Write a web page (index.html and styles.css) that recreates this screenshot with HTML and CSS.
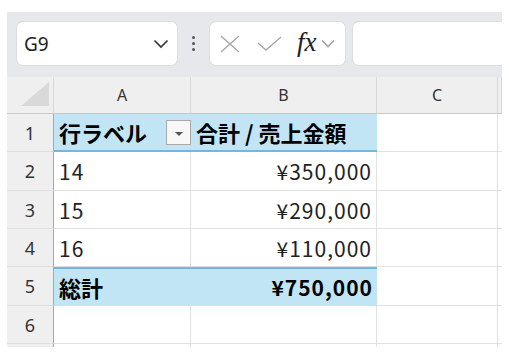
FILE: index.html
```html
<!DOCTYPE html>
<html lang="ja">
<head>
  <meta charset="UTF-8">
  <title>ピボットテーブル</title>
  <link rel="stylesheet" href="styles.css">
</head>
<body>

  <div class="app">
    <div class="toolbar">
      <div class="name-box">
        <span class="cell-ref">G9</span>
        <svg class="chev" width="16" height="10" viewBox="0 0 16 10"><path d="M1.5 1.5 L8 8 L14.5 1.5" fill="none" stroke="#333" stroke-width="1.6"/></svg>
      </div>
      <div class="dots"><i></i><i></i><i></i></div>
      <div class="fx-box">
        <svg width="20" height="18" viewBox="0 0 20 18"><path d="M1 1 L19 17 M19 1 L1 17" stroke="#a6a6a6" stroke-width="1.4" fill="none"/></svg>
        <svg width="25" height="15" viewBox="0 0 25 15"><path d="M1 7 L9 14 L24 1" stroke="#a6a6a6" stroke-width="1.4" fill="none"/></svg>
        <span class="fx">fx</span>
        <svg width="14" height="9" viewBox="0 0 14 9"><path d="M1 1.5 L7 7.5 L13 1.5" fill="none" stroke="#999" stroke-width="1.3"/></svg>
      </div>
      <div class="formula-box"></div>
    </div>

    <div class="sheet">
      <!-- column headers -->
      <div class="corner"><span class="tri"></span></div>
      <div class="col-head">A</div>
      <div class="col-head">B</div>
      <div class="col-head">C</div>
      <div class="col-head"></div>

      <!-- row 1 -->
      <div class="row-head">1</div>
      <div class="cell pivot-head bold">行ラベル<span class="filter-btn"><span class="arrow"></span></span></div>
      <div class="cell pivot-head bold">合計 / 売上金額</div>
      <div class="cell"></div>
      <div class="cell"></div>

      <!-- row 2 -->
      <div class="row-head">2</div>
      <div class="cell num-left">14</div>
      <div class="cell num">¥350,000</div>
      <div class="cell"></div>
      <div class="cell"></div>

      <!-- row 3 -->
      <div class="row-head">3</div>
      <div class="cell num-left">15</div>
      <div class="cell num">¥290,000</div>
      <div class="cell"></div>
      <div class="cell"></div>

      <!-- row 4 -->
      <div class="row-head">4</div>
      <div class="cell num-left">16</div>
      <div class="cell num">¥110,000</div>
      <div class="cell"></div>
      <div class="cell"></div>

      <!-- row 5 -->
      <div class="row-head">5</div>
      <div class="cell total bold">総計</div>
      <div class="cell total bold num">¥750,000</div>
      <div class="cell"></div>
      <div class="cell"></div>

      <!-- row 6 -->
      <div class="row-head">6</div>
      <div class="cell"></div>
      <div class="cell"></div>
      <div class="cell"></div>
      <div class="cell"></div>

      <!-- row 7 (cut off) -->
      <div class="row-head"></div>
      <div class="cell"></div>
      <div class="cell"></div>
      <div class="cell"></div>
      <div class="cell"></div>
    </div>
  </div>

</body>
</html>
```

FILE: styles.css
```css
body {
  margin: 0;
  padding: 0;
  background: #ffffff;
  font-family: "Noto Sans", "Noto Sans CJK JP", sans-serif;
}
.app {
  margin: 12px 0 0 7px;
  width: 495px;
  height: 335px;
  overflow: hidden;
  background: #e7e8eb;
}
.toolbar {
  display: flex;
  align-items: center;
  padding: 10px 0 12px 10px;
  height: 43px;
}
.name-box {
  flex-shrink: 0;
  width: 160px;
  height: 43px;
  box-sizing: border-box;
  background: #fff;
  border-radius: 6px;
  box-shadow: 0 0 0 1px #dcdde0;
  display: flex;
  align-items: center;
  justify-content: space-between;
  padding: 0 8px 0 7px;
}
.cell-ref {
  font-size: 19px;
  color: #222;
}
.dots {
  flex-shrink: 0;
  width: 33px;
  display: flex;
  flex-direction: column;
  align-items: center;
  gap: 3px;
}
.dots i {
  width: 3px;
  height: 3px;
  border-radius: 50%;
  background: #555;
}
.fx-box {
  flex-shrink: 0;
  width: 135px;
  height: 43px;
  box-sizing: border-box;
  background: #fff;
  border-radius: 6px;
  box-shadow: 0 0 0 1px #dcdde0;
  display: flex;
  align-items: center;
  padding-left: 10px;
}
.fx-box svg:nth-child(2) {
  margin-left: 17px;
}
.fx {
  font-family: "Liberation Serif", "DejaVu Serif", serif;
  font-style: italic;
  font-size: 27px;
  color: #222;
  margin: -3px 4px 0 15px;
}
.formula-box {
  flex-shrink: 0;
  margin-left: 8px;
  width: 170px;
  height: 43px;
  background: #fff;
  border-radius: 6px;
  box-shadow: 0 0 0 1px #dcdde0;
}
.sheet {
  display: grid;
  grid-template-columns: 47px 137px 186px 121px 4px;
  grid-template-rows: 37px 38px 39px 38px 38px 39px 38px 10px;
  background: #fff;
}
.corner {
  background: #efefef;
  border-right: 1px solid #d8d8d8;
  border-bottom: 1px solid #c9c9c9;
  position: relative;
}
.tri {
  position: absolute;
  right: 4px;
  bottom: 7px;
  width: 0;
  height: 0;
  border-left: 28px solid transparent;
  border-bottom: 24px solid #d9d9d9;
}
.col-head {
  background: #efefef;
  border-right: 1px solid #d8d8d8;
  border-bottom: 1px solid #c9c9c9;
  display: flex;
  align-items: center;
  justify-content: center;
  font-size: 16px;
  color: #333;
}
.row-head {
  background: #efefef;
  border-right: 1px solid #a8a8a8;
  border-bottom: 1px solid #dedede;
  display: flex;
  align-items: center;
  justify-content: center;
  font-size: 18px;
  color: #333;
}
.cell {
  border-right: 1px solid #e1e1e1;
  border-bottom: 1px solid #e1e1e1;
  display: flex;
  align-items: center;
  padding: 0 4px 0 5px;
  font-family: "Noto Sans CJK JP", sans-serif;
  font-size: 22px;
  color: #222;
  white-space: nowrap;
  overflow: hidden;
}
.num, .num-left {
  font-size: 21px;
  letter-spacing: 1px;
}
.num {
  justify-content: flex-end;
}
.bold {
  font-weight: bold;
  color: #000;
}
.pivot-head {
  background: #c2e5f6;
  border-right: none;
  border-bottom: 2px solid #72b6e2;
}
.total {
  background: #c2e5f6;
  border-right: none;
  border-bottom: none;
  box-shadow: inset 0 2px 0 #72b6e2;
}
.filter-btn {
  margin-left: auto;
  margin-right: -4px;
  width: 25px;
  height: 25px;
  box-sizing: border-box;
  border: 1px solid #a9a9a9;
  background: #f7f7f7;
  display: flex;
  align-items: center;
  justify-content: center;
}
.arrow {
  width: 0;
  height: 0;
  border-left: 4px solid transparent;
  border-right: 4px solid transparent;
  border-top: 4px solid #555;
  margin-top: 3px;
}
```
